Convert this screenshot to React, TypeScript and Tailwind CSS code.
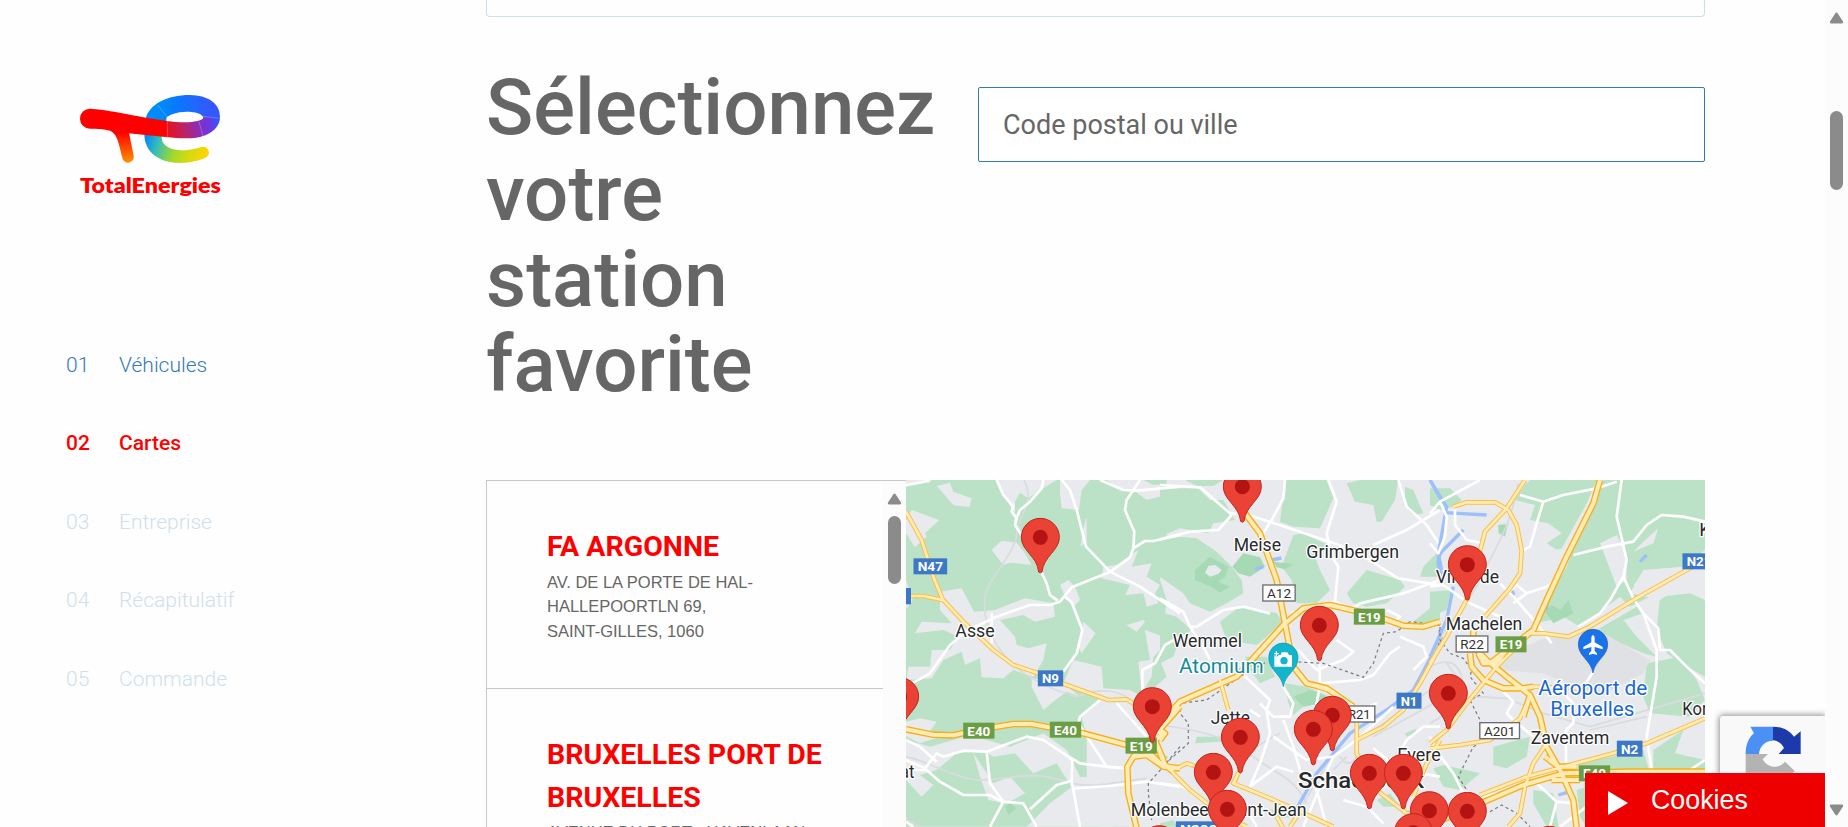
import React from "react";

const steps = [
  { no: "01", label: "Véhicules", tone: "font-light text-[#337ab7]" },
  { no: "02", label: "Cartes", tone: "font-medium text-[#ff0000]" },
  { no: "03", label: "Entreprise", tone: "font-light text-[#cfe0ec]" },
  { no: "04", label: "Récapitulatif", tone: "font-light text-[#cfe0ec]" },
  { no: "05", label: "Commande", tone: "font-light text-[#cfe0ec]" },
];

const stations = [
  { name: "FA ARGONNE", street: "AV. DE LA PORTE DE HAL-HALLEPOORTLN 69,", city: "SAINT-GILLES, 1060" },
  { name: "BRUXELLES PORT DE BRUXELLES", street: "AVENUE DU PORT - HAVENLAAN", city: "BRUXELLES, 1000" },
];

function Logo() {
  return (
    <svg viewBox="0 0 540 390" className="ml-[60px] h-[130px] w-[180px]">
      <defs>
        <linearGradient id="lgTail" x1="262" y1="165" x2="440" y2="225" gradientUnits="userSpaceOnUse">
          <stop offset="0" stopColor="#0a8cf0" /><stop offset=".2" stopColor="#35bfb8" /><stop offset=".48" stopColor="#a3d72c" /><stop offset=".75" stopColor="#d9da10" /><stop offset="1" stopColor="#ffd400" />
        </linearGradient>
        <linearGradient id="lgTop" x1="300" y1="0" x2="450" y2="0" gradientUnits="userSpaceOnUse">
          <stop offset="0" stopColor="#008cf8" /><stop offset=".35" stopColor="#0878ff" /><stop offset="1" stopColor="#3458ff" />
        </linearGradient>
        <linearGradient id="lgMid" x1="320" y1="150" x2="470" y2="115" gradientUnits="userSpaceOnUse">
          <stop offset="0" stopColor="#e8101c" /><stop offset=".35" stopColor="#bb2268" /><stop offset=".7" stopColor="#7e30d0" /><stop offset=".85" stopColor="#6a38e0" /><stop offset="1" stopColor="#3b53fb" />
        </linearGradient>
        <linearGradient id="lgLeg" x1="0" y1="155" x2="0" y2="240" gradientUnits="userSpaceOnUse">
          <stop offset="0" stopColor="#ff0000" /><stop offset="1" stopColor="#ff8a00" />
        </linearGradient>
      </defs>
      <path d="M253 160C253 215 300 247 362 246C395 245 415 239 435 231A17 17 0 0 0 424 198C405 204 385 209 362 208C325 206 303 190 305 165Z" fill="url(#lgTail)" />
      <path d="M257 113C268 70 320 42 390 42C442 43 482 65 480 112L430 110C428 98 405 92 380 92C350 92 328 102 320 109L318 122Z" fill="url(#lgTop)" />
      <path d="M480 108C480 150 430 174 380 172C358 172 340 170 318 168V120C350 124 375 125 395 123C415 120 430 117 430 109Z" fill="url(#lgMid)" />
      <path d="M157 153C170 163 175 180 187 231A17 17 0 0 0 221 224L207 155Z" fill="url(#lgLeg)" />
      <path d="M90 83C130 84 220 103 258 110L322 120L320 168C290 167 240 160 207 157L160 155C150 146 130 143 90 143A30 30 0 0 1 90 83Z" fill="#ff0000" />
      <path d="M293 72L321 107M430 106L480 112M417 121L429 166M322 120V168" stroke="#fff" strokeOpacity=".35" strokeWidth="2" fill="none" />
      <text x="60" y="337" fontFamily="Lato, sans-serif" fontWeight="800" fontSize="64" textLength="423" lengthAdjust="spacingAndGlyphs" fill="#ff0000">TotalEnergies</text>
    </svg>
  );
}

/* Map tiles share one scale (3 units per pixel) and are placed side by side. */
type Tile = { x: number; green: string[]; wood: string[]; grey: string[]; water: string[]; rail: string[]; white: string[]; amber: string[]; motorway: string[]; dashed: string[] };

const tiles: Tile[] = [
  {
    x: 0,
    green: ["18,30 800,30 800,190 780,330 800,390 780,570 800,620 730,680 600,690 545,740 560,800 640,870 670,940 650,1020 690,1070 18,1070"],
    wood: ["615,865 630,850 650,858 650,880 630,882 615,878", "315,1010 330,998 348,1015 325,1035"],
    grey: [
      "18,30 100,30 60,42 18,50",
      "110,48 150,38 160,65 215,85 208,112 160,105",
      "35,120 118,150 75,190 80,200 45,232 18,190 18,150",
      "290,30 470,30 430,55 385,85 360,68 345,95 345,130 315,85",
      "480,30 570,30 545,60 537,120 485,115 480,70",
      "560,140 560,215 542,230 549,180",
      "275,240 305,212 350,218 375,250 395,285 330,278 310,285",
      "620,30 730,30 760,45 820,40 820,70 740,90 700,60 660,60",
      "715,240 695,290 755,280 740,320 780,345 765,370 775,400 740,410 730,370 675,375 690,345 605,325 610,290 650,285",
      "480,345 505,330 525,350 540,390 520,410 495,380",
      "120,365 185,355 222,425 285,420 375,385 460,400 465,440 405,455 370,435 300,450 345,500 350,525 385,535 440,520 430,570 400,620 340,600 310,625 245,622 240,565 195,585 185,545 130,570 95,625 20,630 25,590 90,590 95,540 150,540 175,500 130,480 45,490 65,455 155,460 120,420",
      "550,455 587,490 545,550 535,530",
      "520,570 605,590 610,655 690,660 760,700 780,740 780,820 720,790 650,720 620,690 490,640",
      "395,625 490,640 540,680 500,665 460,695 430,720 395,650",
      "18,755 60,745 110,755 85,790 18,800",
      "735,480 790,500 790,530 760,560 755,620 725,670 715,575 750,570",
      "730,450 680,465 710,485 735,455",
      "18,810 90,830 210,795 330,830 430,790 500,840 540,920 660,930 640,1070 535,1070 520,960 470,880 400,910 345,850 280,860 250,840 170,850 110,900 60,915 100,945 65,980 18,930",
      "220,850 280,940 330,920 375,970 320,1000 265,990 240,920",
      "450,1000 530,940 540,1070 380,1070",
      "20,800 85,780 120,800 60,820",
      "18,330 38,390 22,415 18,410",
      "560,800 600,790 680,830 700,1070 600,1070 560,940",
    ],
    water: [],
    rail: ["372,30C410,110 350,130 350,195C340,260 260,330 255,380C250,440 262,470 275,500C330,600 420,650 530,680C600,650 670,660 700,700", "18,860C90,875 150,920 230,930C330,930 390,900 480,930C560,960 620,940 740,925", "18,1045L70,1080"],
    white: [
      "M290,30L310,75L340,110L335,125L350,145L345,165L365,195L421,300L440,340L450,375L473,392",
      "M430,30L425,55L390,95L360,120L345,155",
      "M485,30L510,60L530,120L558,230L630,305L720,350L765,380L840,430",
      "M600,30L670,60L710,62L840,50M720,30L680,90L675,120L703,185L700,235L690,262L632,305L515,352L480,395L450,405L390,405L290,440L205,480L150,525L90,610L18,650",
      "M840,195L760,213L735,213L700,235",
      "M495,380L515,397L547,480L530,550L490,605",
      "M275,430L275,520M18,45L90,32",
      "M840,500L795,525L765,580L727,600L727,680",
      "M600,690L540,740L535,760L620,890L680,895",
      "M650,700L700,755L740,800",
      "M18,870L75,895L110,850L130,860L190,842L260,845L380,800L430,810L490,850L540,880L620,890L680,895",
      "M260,845L270,940L310,995L270,1070M18,900L80,900L120,935L190,975L270,975L305,995L370,1000L410,1070M390,1018L470,945L515,932L517,870L490,850M515,932L540,1070M520,955L630,948L740,935L840,950",
      "M18,810L60,830L110,875M18,1055L40,1070",
    ],
    amber: [
      "M18,125L65,210L100,320L128,388L190,455L280,540L340,585L415,610L500,645L625,690L680,688L715,710",
      "M18,378L70,378L128,390",
    ],
    motorway: [
      "M18,778L100,794L160,796L230,780L340,762L395,762L490,780L550,790L680,825L740,840L790,890L840,895",
      "M710,1075L685,970L682,890L700,860L760,800L840,710",
      "M735,765L790,790L765,810L790,870M700,860L740,855L790,890",
    ],
    dashed: ["M840,830L790,890L745,940L745,970L755,1050"],
  },
  {
    x: 780,
    green: [
      "0,45 40,55 115,55 150,90 190,90 225,150 160,160 145,190 60,175 0,200",
      "75,30 190,30 160,48 110,48",
      "375,30 500,30 520,85 480,175 400,170 360,155",
      "560,40 600,30 715,30 705,90 665,155 650,155 640,105 585,95",
      "735,50 760,60 790,130 760,135 735,110",
      "400,195 430,190 505,225 465,260 480,300 510,360 470,400 410,400 395,330 365,290",
      "0,210 60,200 110,205 170,245 215,290 245,330 250,370 200,400 150,425 90,400 70,370 0,320",
      "180,455 245,405 350,430 370,455 320,500 290,525 200,510",
      "0,425 50,440 95,480 60,500 40,560 0,580",
      "560,370 620,300 720,330 735,350 680,400 620,410 580,400",
      "790,290 830,250 840,320 780,320",
      "255,560 320,560 345,620 300,640 270,600",
      "375,640 440,650 530,690 430,710 400,735 385,700",
      "760,455 840,390 840,450 790,470",
      "110,800 200,800 180,815 105,820",
      "735,790 770,775 765,790 740,800",
      "650,990 690,970 720,1010 670,1010",
      "0,850 25,860 10,880",
      "0,1060 40,1050 50,1070 0,1070",
      "330,1020 380,1010 400,1040 350,1045",
    ],
    wood: ["105,300 150,260 205,290 195,320 175,335 210,350 180,368 150,348 105,330", "217,290 250,250 300,262 315,290 270,320 235,310", "340,275 400,282 375,298 350,292", "400,680 450,660 530,690 430,710"],
    grey: ["145,288 165,285 185,300 175,312 150,320 135,308", "730,230 760,215 740,290 705,280"],
    water: ["M810,30L850,100M850,240C820,270 840,300 850,320M285,298L310,290M335,270L364,264M845,500L760,660L680,720L570,790L470,910L410,1015"],
    rail: ["0,765C120,780 200,800 280,860S400,920 440,1000", "360,790C260,840 250,860 230,940", "840,640C760,690 680,770 520,850L430,1000", "640,800L840,690", "540,860C560,900 600,870 590,840M520,900L560,860"],
    white: [
      "M0,45L50,48L120,52L210,130L250,130L420,185L580,240L715,325L840,345",
      "M215,135L175,180L90,185L0,208M375,30L370,85L335,150L310,190M505,30L530,95L500,190L515,260L535,290L525,395",
      "M715,30L740,110L800,165L840,225M840,120L740,180L640,225M0,385L70,425L90,470L110,470L190,420L250,410L330,430M90,470L135,540L150,570",
      "M525,395L460,410L395,430M525,395L570,420L600,400L730,370L840,330",
      "M235,600L330,690L320,720L330,790L300,880L270,950M370,650L400,700L390,740L340,740L300,700M478,575L480,650L465,720",
      "M600,630L480,640M600,630L640,615L690,550L720,530M415,540L470,600L550,570L580,545L530,510M690,465L720,440L680,420",
      "M720,500L790,530L800,560L760,600M560,715L600,720L650,700M370,750L400,830L420,900L470,960L500,1070M340,800L440,870L520,860L590,810L700,710",
      "M0,940L70,950L140,1000M190,960L250,1000L290,1070M270,950L350,890L400,905M640,835L720,900L840,920M550,990L620,1010L670,1060M300,740L270,720",
      "M840,770L790,770L740,810L700,880M520,860L480,950L430,1070",
    ],
    amber: [
      "M180,630L205,720M240,900L220,940L330,985L420,1025L520,1070M0,880L50,895L80,880L110,890",
      "M35,905L90,960L180,1030L260,1070M590,810L670,770L730,720L780,640L840,530M590,760L590,850L650,960L740,1030L840,1020M760,980L800,880L840,810M390,1070L430,1010M350,1040L370,1075",
      "M470,650L520,665L590,730L590,760",
    ],
    motorway: [
      "M255,130L300,190L350,330L375,460L400,590L440,640L500,655L580,710",
      "M0,760L60,695L230,620L370,465L430,415L510,405L640,435L730,467L790,470L840,455",
      "M0,780L15,790L0,810M0,850L15,885L40,905",
    ],
    dashed: ["M315,578L240,620L140,690L60,700L60,730L85,760L85,820L0,895", "M415,576L490,580L610,622L640,580L670,490L710,485L750,455L840,465", "M838,480L835,530"],
  },
  {
    x: 1590,
    green: [
      "0,55 60,55 95,90 70,110 30,120 0,105",
      "300,30 500,30 470,100 390,245 350,220 395,190 355,160 300,150 315,105 255,90 285,45",
      "520,30 825,30 825,240 760,290 650,300 610,345 680,370 600,410 570,380 450,470 400,440 320,460 360,380 410,290 450,180 500,100",
      "0,365 65,360 50,420 0,440",
      "500,480 620,410 660,470 680,560 640,550 530,500",
      "690,380 780,370 825,390 825,620 770,590 710,550 680,480",
      "650,580 750,560 800,630 825,690 780,740 660,730 640,680",
      "190,830 300,800 290,860 230,895 190,885",
      "10,895 40,885 150,910 90,960 40,950",
      "310,960 370,970 385,1070 350,1070 310,1000",
      "450,880 640,840 660,910 430,910",
      "670,840 760,780 735,850 825,870 825,910 670,910",
      "205,165 235,160 225,200 205,190",
      "440,960 470,950 470,1070 450,1040",
    ],
    wood: ["345,425 365,405 390,420 415,390 430,430 370,460", "205,165 230,165 225,198 207,188"],
    grey: ["510,220 560,195 590,250 590,330 560,350", "640,215 685,175 670,220 610,245", "300,225 340,220 370,240 430,230 400,300 350,320 290,300", "640,300 770,290 825,310 825,370 720,370 690,390 600,370", "580,450 640,430 690,490 680,560 620,500", "210,565 330,510 490,475 540,500 660,570 640,610 510,680 340,610 200,600"],
    water: ["M0,30L30,80L50,110L25,250L35,300M45,128L170,135M40,240L100,180M70,350L50,450L0,560M245,360L252,375M630,275L650,255M350,420L350,400M385,975L410,968"],
    rail: ["265,40C240,180 190,240 150,330S0,500 0,600", "0,760L140,680L230,685L340,730L480,770L825,670", "480,780L650,740", "0,590C60,560 90,580 100,640S40,680 0,640M50,580L80,620"],
    white: [
      "M150,30L30,95L0,130M75,105L75,165L110,210L160,220M30,95L50,140L45,200L25,250L0,220M575,30L560,140L590,270L580,320L610,385L640,430L680,540L680,620L650,800L665,900",
      "M270,75L340,95L400,75L500,55L560,35M340,95L320,160L300,230L270,245M430,255L530,230L610,215L650,165L695,135L760,140L825,155",
      "M580,320L540,390L510,430L445,470M640,430L685,475L690,540L720,540L770,590L825,640",
      "M110,395L210,440L240,480M210,340L250,380L320,460L365,520M250,400L290,370L350,350L380,330M165,430L220,380L260,345L290,370",
      "M490,605L460,650M410,680L430,700L430,760L408,780L408,880M215,660L250,695L230,730L250,750L310,800",
      "M0,800L25,850L70,910L95,960M825,870L780,900L740,910M320,940L380,995L430,1000M380,995L360,1070M0,350L40,345L110,395M90,960L150,980L200,970M390,1070L470,1010",
    ],
    amber: [
      "M285,30L230,115L165,185L115,380L50,500L0,580M70,110L110,97L195,97L235,120L260,165L275,240L270,310L240,355L165,440",
      "M825,270L770,300L610,390L480,470L415,500L340,490L290,490",
      "M0,820L50,780L110,700L200,590L310,480M825,745L650,820L550,850L400,890L290,920L150,975M350,820L310,880L285,950L270,1030L235,1070",
      "M0,835L90,825L180,810L270,745L295,690M310,650L440,655L480,665",
    ],
    motorway: [
      "M510,30L490,100L410,260L350,390L310,480L180,580",
      "M130,480L130,530L170,570L230,620L300,675L330,740L350,830L395,910L430,990L440,1075",
      "M120,550L125,590L160,630L220,655L280,655L310,650M145,550L160,580L200,580L225,545M300,675L280,740",
      "M0,1065L140,1005L280,945L400,910L600,905L825,905M345,860L385,890L440,890M365,930L450,930",
    ],
    dashed: ["M0,465L30,465L30,510L60,550L100,565L125,600L120,620L160,670L120,690L155,760L185,800L130,830L85,920L110,960", "M180,1025L215,1005L260,1030L300,1070"],
  },
];

const pins = [[421, 202], [-1, 680], [757, 710], [1027, 50], [1258, 466], [1297, 736], [1240, 778], [1021, 802], [940, 907], [982, 1018], [1408, 910], [1510, 910], [1588, 1022], [1540, 1088], [1702, 284], [1645, 670], [1702, 1024], [778, 1124], [1948, 1126]];

const towns: [string, number, number, number][] = [
  ["Asse", 166, 502, 118], ["Meise", 1001, 243, 142], ["Grimbergen", 1219, 263, 278], ["Wemmel", 818, 531, 208],
  ["Jette", 932, 763, 118], ["Vilvorde", 1607, 338, 190], ["Machelen", 1637, 479, 230], ["Zaventem", 1892, 822, 236],
  ["Evere", 1492, 873, 130], ["Molenbeek-Saint-Jean", 692, 1039, 528],
];

const shields: [string, number, number, number, string][] = [
  ["N47", 39, 264, 104, "blue"], ["N9", 412, 600, 79, "blue"], ["E40", 188, 757, 97, "green"], ["E40", 448, 754, 97, "green"],
  ["E19", 675, 802, 97, "green"], ["A12", 1087, 344, 100, "white"], ["E19", 1360, 415, 96, "green"], ["R21", 1330, 707, 96, "white"],
  ["N1", 1488, 667, 78, "blue"], ["N290", 826, 1053, 140, "blue"], ["R22", 1667, 497, 98, "white"], ["E19", 1785, 498, 96, "green"],
  ["A201", 1738, 757, 122, "white"], ["N2", 2149, 811, 80, "blue"], ["N21", 2346, 249, 102, "blue"], ["E40", 2035, 885, 97, "green"],
];

function Pin({ x, y }: { x: number; y: number }) {
  return (
    <g transform={`translate(${x} ${y})`}>
      <path d="M-5 104C-10 56-57 40-57 0A57 57 0 0 1 57 0C57 40 10 56 5 104Q0 109-5 104Z" fill="#ea4335" stroke="#c5221f" strokeWidth="3" />
      <circle r="22.5" fill="#b31412" />
    </g>
  );
}

function Lines({ tile }: { tile: Tile }) {
  return (
    <g transform={`translate(${tile.x} 0)`} fill="none" strokeLinejoin="round">
      {tile.rail.map((d, i) => <path key={i} d={"M" + d} stroke="#d9dbdf" strokeWidth="5" />)}
      {tile.water.map((d, i) => <path key={i} d={d} stroke="#9dc0fb" strokeWidth="10" />)}
      {tile.white.map((d, i) => <path key={i} d={d} stroke="#fff" strokeWidth="8" />)}
      {tile.dashed.map((d, i) => <path key={i} d={d} stroke="#77797c" strokeWidth="3.5" strokeDasharray="9 9" />)}
    </g>
  );
}

function StationMap() {
  return (
    <svg viewBox="18 30 2397 1041" className="block h-[347px] w-[799px] shrink-0" fontFamily="Roboto, sans-serif">
      <rect x="18" y="30" width="2397" height="1041" fill="#e8eaed" />
      {tiles.map((t) => (
        <g key={t.x} transform={`translate(${t.x} 0)`}>
          {t.green.map((p, i) => <polygon key={i} points={p} fill="#bbe2c6" />)}
          {t.wood.map((p, i) => <polygon key={i} points={p} fill="#a5dab5" />)}
          {t.grey.map((p, i) => <polygon key={i} points={p} fill={i === 5 && t.x === 1590 ? "#dfe1e5" : "#e8eaed"} />)}
        </g>
      ))}
      {tiles.map((t) => <Lines key={t.x} tile={t} />)}
      <g fill="none" strokeLinejoin="round">
        {tiles.map((t) => <path key={t.x} transform={`translate(${t.x} 0)`} d={t.amber.join("")} stroke="#fbbf45" strokeWidth="14" />)}
        {tiles.map((t) => <path key={t.x} transform={`translate(${t.x} 0)`} d={t.motorway.join("")} stroke="#f9ae14" strokeWidth="20" />)}
        {tiles.map((t) => <path key={t.x} transform={`translate(${t.x} 0)`} d={t.amber.join("")} stroke="#ffebb5" strokeWidth="8" />)}
        {tiles.map((t) => <path key={t.x} transform={`translate(${t.x} 0)`} d={t.motorway.join("")} stroke="#ffebb5" strokeWidth="12" />)}
      </g>

      {shields.map(([label, x, y, w, kind], i) => (
        <g key={i}>
          <rect x={x + 1.5} y={y + 1} width={w - 3} height="48" fill={kind === "blue" ? "#3c78c8" : kind === "green" ? "#6b9d44" : "#fff"} stroke={kind === "white" ? "#6b6d70" : "none"} strokeWidth="4" />
          <text x={x + w / 2} y={y + 40} textAnchor="middle" fontSize="41" fontWeight={kind === "white" ? 400 : 700} textLength={w - 28} lengthAdjust="spacingAndGlyphs" fill={kind === "white" ? "#333" : "#fff"}>{label}</text>
        </g>
      ))}

      <g fontSize="55" fill="#27292c" stroke="#fff" strokeWidth="8" strokeLinejoin="round" paintOrder="stroke">
        {towns.map(([name, x, y, w]) => <text key={name} x={x} y={y} textLength={w} lengthAdjust="spacingAndGlyphs">{name}</text>)}
        <text x="43" y="925" textAnchor="end" textLength="140" lengthAdjust="spacingAndGlyphs">Ternat</text>
        <text x="2398" y="199">K</text>
        <text x="2347" y="735" textLength="245" lengthAdjust="spacingAndGlyphs">Kortenberg</text>
        <text x="1194" y="954" fontSize="66" fontWeight="500" textLength="378" lengthAdjust="spacingAndGlyphs">Schaerbeek</text>
        <text x="837" y="609" fontSize="58" fill="#128b96" textLength="254" lengthAdjust="spacingAndGlyphs">Atomium</text>
        <text x="1915" y="675" fontSize="59" fill="#1967d2" textLength="327" lengthAdjust="spacingAndGlyphs">Aéroport de</text>
        <text x="1951" y="738" fontSize="59" fill="#1967d2" textLength="252" lengthAdjust="spacingAndGlyphs">Bruxelles</text>
      </g>
      <rect x="18" y="354" width="15" height="49" fill="#3c78c8" />

      <g transform="translate(1150 563)">
        <path d="M0 87C-6 48-44 38-44 0A44 44 0 0 1 44 0C44 38 6 48 0 87Z" fill="#12b5cb" stroke="#0b98ac" strokeWidth="2" />
        <path d="M-27-8H-12L-8-8L-5-16H12L17-8H26V27H-27Z" fill="#fff" />
        <path d="M-21-19V-4M-29-12H-13" stroke="#12b5cb" strokeWidth="10" />
        <path d="M-21-19V-5M-28-12H-14" stroke="#fff" strokeWidth="4" />
        <circle cx="2" cy="9" r="11" fill="#12b5cb" />
      </g>
      <g transform="translate(2079 522)">
        <path d="M0 87C-6 48-44 38-44 0A44 44 0 0 1 44 0C44 38 6 48 0 87Z" fill="#1a73e8" stroke="#185abc" strokeWidth="2" />
        <path d="M0-27Q5-25 5-18V-5L29 9V16L5 9V21L12 28V33L0 29L-12 33V28L-5 21V9L-29 16V9L-5-5V-18Q-5-25 0-27Z" fill="#fff" />
      </g>
      {pins.map(([x, y], i) => <Pin key={i} x={x} y={y} />)}
    </svg>
  );
}

function Arrow({ down = false }: { down?: boolean }) {
  return (
    <svg viewBox="0 0 15 12" className={down ? "h-3 w-[15px] rotate-180" : "h-3 w-[15px]"}>
      <path d="M6.2 1.4Q7.5-.3 8.8 1.4L14 9.4Q14.6 11.3 13 11.4H2Q.4 11.3 1 9.4Z" fill="#8b8b8b" />
    </svg>
  );
}

export default function App() {
  return (
    <div className="relative flex h-[827px] w-[1848px] overflow-hidden bg-[#fefefe] font-['Roboto',sans-serif]">
      <aside className="w-[486px] shrink-0 pt-[81px]">
        <Logo />
        <nav className="mt-[115px] pl-[66px]">
          {steps.map((s) => (
            <div key={s.no} className={"flex h-[78.5px] items-center text-[21px] leading-none " + s.tone}>
              <span className="w-[53px]">{s.no}</span>
              <span>{s.label}</span>
            </div>
          ))}
        </nav>
      </aside>

      <main className="flex w-[1219px] shrink-0 flex-col">
        <div className="h-[17px] shrink-0 rounded-b border border-t-0 border-[#cfdfe8]" />
        <section className="flex h-[463px] shrink-0 justify-between">
          <h1 className="w-[450px] pt-[48px] text-[78px] font-medium leading-[85.8px] text-[#666]">
            Sélectionnez<br />votre<br />station<br />favorite
          </h1>
          <input
            placeholder="Code postal ou ville"
            className="mt-[70px] h-[75px] w-[727px] rounded-[2px] border border-[#337ab7] bg-white px-6 text-[27px] text-[#666] placeholder:text-[#666] placeholder:opacity-100"
          />
        </section>
        <section className="flex h-[347px] shrink-0">
          <div className="flex w-[420px] overflow-hidden border-l border-t border-[#c8c8c8]">
            <div className="w-[396px] shrink-0">
              {stations.map((s) => (
                <article key={s.name} className="min-h-[208px] border-b border-[#c8c8c8] pl-[60px] pr-[50px] pt-[45px]">
                  <h2 className="text-[28.5px] font-bold leading-[42.7px] text-[#ff0000]">{s.name}</h2>
                  <p className="mt-px w-[270px] font-['Liberation_Sans',sans-serif] text-[16.5px] leading-[24.5px] text-[#666]">
                    {s.street}<br />{s.city}
                  </p>
                </article>
              ))}
            </div>
            <div className="flex w-[23px] shrink-0 flex-col items-center bg-[#fcfcfc] pt-[12px]">
              <Arrow />
              <div className="mt-[11px] h-[68px] w-[13px] rounded-full bg-[#8b8b8b]" />
            </div>
          </div>
          <StationMap />
        </section>
      </main>

      <div className="absolute right-0 top-0 flex h-full w-[23px] flex-col items-center justify-between bg-[#fcfcfc] pb-[11px] pt-[12px]">
        <div className="flex flex-col items-center">
          <Arrow />
          <div className="mt-[87px] h-[79px] w-[13px] rounded-full bg-[#8b8b8b]" />
        </div>
        <Arrow down />
      </div>

      <div className="absolute bottom-0 right-[23px] h-[111px] w-[105px] overflow-hidden rounded-tl-[3px] bg-[#f9f9f9] shadow-[0_0_6px_1px_rgba(0,0,0,0.45)] [clip-path:inset(-10px_0_0_-10px)]">
        <svg viewBox="450 78 315 333" className="h-full w-full">
          <path d="M541 110H609V152C585 152 568 170 567 192H527C527 165 535 144 552 130Z" fill="#4a90f5" />
          <path d="M609 110C635 110 657 120 672 140L692 124V192H626L642 174C635 160 622 152 609 151Z" fill="#1c3aa9" />
          <path d="M527 192H594L578 208C590 232 625 240 645 215L674 243L660 260H527Z" fill="#b3b3b3" />
        </svg>
      </div>
      <div className="absolute bottom-0 right-[23px] flex h-[54px] w-[240px] items-center bg-[#ee0000] pl-[22px] font-['Liberation_Sans',sans-serif] text-[26.8px] leading-none text-white">
        <svg viewBox="0 0 21 24" className="mt-[5px] h-6 w-[21px]"><path d="M1 0L21 12L1 24Z" fill="#fff" /></svg>
        <span className="ml-[23px]">Cookies</span>
      </div>
    </div>
  );
}
